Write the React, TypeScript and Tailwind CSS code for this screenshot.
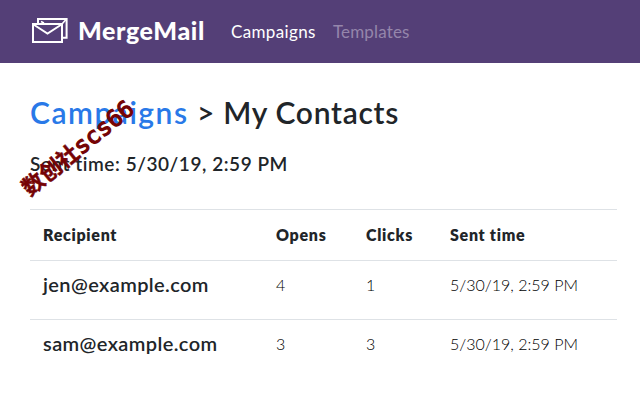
const recipients = [
  { email: 'jen@example.com', opens: 4, clicks: 1, sent: '5/30/19, 2:59 PM' },
  { email: 'sam@example.com', opens: 3, clicks: 3, sent: '5/30/19, 2:59 PM' },
];

function MailLogo() {
  return (
    <svg className="mr-[10px] mb-0.5 h-[27px] w-9" viewBox="0 0 36 27" fill="none" stroke="white" strokeWidth="2">
      <path d="M6 6V2H34.6V20.8H31" />
      <path d="M1 7H30V25H1Z" />
      <path d="M1.5 7.5L15.5 16.5L29.5 7.5" />
      <path d="M30 7L34 2.5M9 4.5L12 6" strokeWidth="1.6" />
    </svg>
  );
}

export default function App() {
  return (
    <div className="relative h-[400px] w-[640px] overflow-hidden bg-white font-['Lato',sans-serif] text-[#212529]">
      <nav className="flex h-[63px] items-center bg-[#543f77] pl-8">
        <MailLogo />
        <span className="mb-0.5 w-[126px] text-[25px] font-black tracking-[0.6px] text-white">MergeMail</span>
        <span className="ml-[27px] w-[85px] text-[17px] tracking-[0.35px] text-white">Campaigns</span>
        <span className="ml-[17px] text-[17px] tracking-[0.15px] text-[#9586ab]">Templates</span>
      </nav>

      <main className="pl-[30px] pr-[23px]">
        <h1 className="flex pt-[31px] text-[30px] leading-9 font-semibold">
          <span className="w-[159px] tracking-[1.5px] text-[#2979e8]">Campaigns</span>
          <span className="ml-[8px] tracking-[0.7px]">&gt; My Contacts</span>
        </h1>
        <h2 className="mt-[22px] text-[19px] leading-6 font-semibold tracking-[0.54px]">Sent time: 5/30/19, 2:59 PM</h2>

        <div className="mt-[33px]">
          <div className="grid h-[51px] grid-cols-[233px_90px_84px_1fr] items-center border-t border-[#dee2e6] pl-[13px] text-[16px] font-extrabold tracking-[0.7px]">
            <span>Recipient</span>
            <span>Opens</span>
            <span>Clicks</span>
            <span>Sent time</span>
          </div>
          {recipients.map((r) => (
            <div key={r.email} className="grid h-[59px] grid-cols-[233px_90px_84px_1fr] items-center border-t border-[#dee2e6] pb-[10px] pl-[13px] text-[16px] font-light text-black">
              <span className="pb-[3px] text-[20px] font-semibold tracking-[0.4px] text-[#212529]">{r.email}</span>
              <span>{r.opens}</span>
              <span>{r.clicks}</span>
              <span>{r.sent}</span>
            </div>
          ))}
        </div>
      </main>

      <div className="absolute top-[176px] left-[33px] origin-bottom-left -rotate-[39deg] font-['DejaVu_Sans_Mono','Noto_Sans_CJK_SC',monospace] text-[23px] leading-6 whitespace-nowrap text-[#750305]">
        <span className="text-[22px] font-bold [-webkit-text-stroke:0.5px_#750305]">数创社</span>
        <span className="tracking-[0.2px] [-webkit-text-stroke:1.3px_#750305]">scs66</span>
      </div>
    </div>
  );
}
